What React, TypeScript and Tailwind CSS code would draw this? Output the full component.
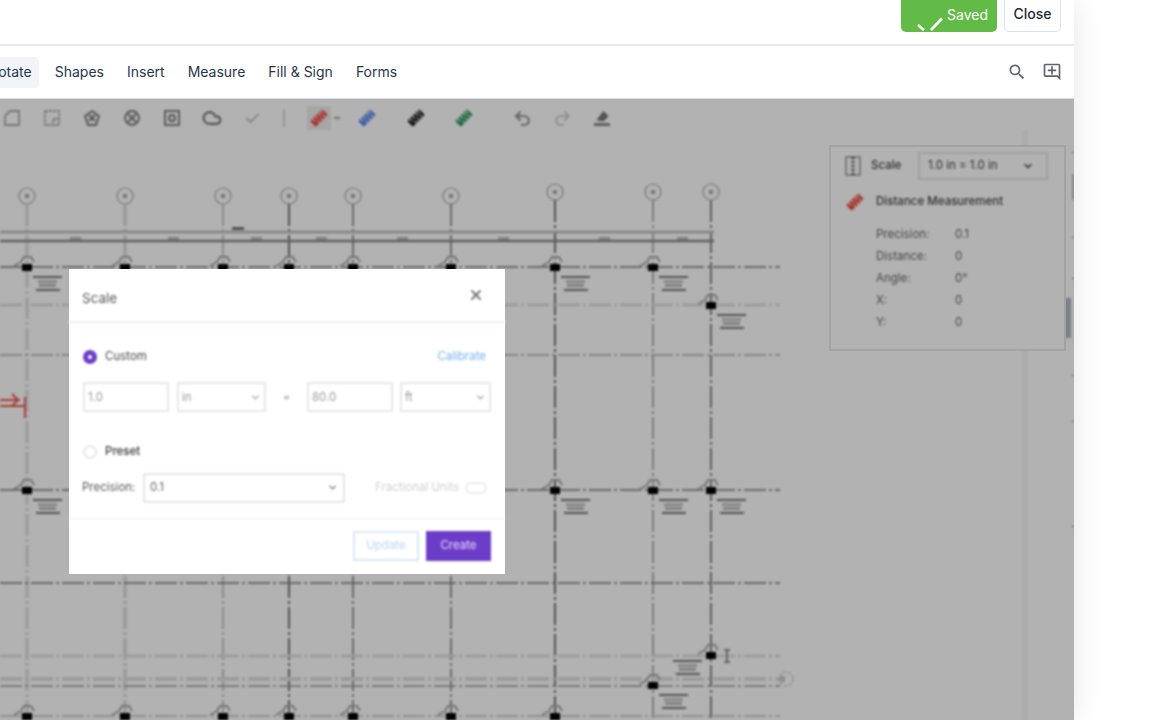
import { Check, ChevronDown, Cloud, Redo2, Undo2, X } from 'lucide-react';
import { MdOutlineAddComment, MdSearch } from 'react-icons/md';

const tabs = ['Shapes', 'Insert', 'Measure', 'Fill & Sign', 'Forms'];

const gridLines = [
    { x: 27, y: 196, stroke: '#e4e4e4', w: 4 },
    { x: 125, y: 196, stroke: '#e0e0e0', w: 4 },
    { x: 223, y: 196, stroke: '#b8b8b8', w: 1.5 },
    { x: 289, y: 196, stroke: '#777', w: 2 },
    { x: 353, y: 196, stroke: '#999', w: 2 },
    { x: 451, y: 196, stroke: '#999', w: 2 },
    { x: 555, y: 192, stroke: '#777', w: 2 },
    { x: 653, y: 192, stroke: '#b4b4b4', w: 2 },
    { x: 711, y: 192, stroke: '#888', w: 2 },
];

const rows = [
    { y: 267, stroke: '#777', w: 1.5 },
    { y: 305, stroke: '#e0e0e0', w: 3 },
    { y: 355, stroke: '#aaa', w: 1.5 },
    { y: 490, stroke: '#777', w: 1.5 },
    { y: 583, stroke: '#777', w: 1.5 },
    { y: 656, stroke: '#e0e0e0', w: 3 },
    { y: 679, stroke: '#e0e0e0', w: 4 },
    { y: 686, stroke: '#999', w: 1.5 },
    { y: 716, stroke: '#d0d0d0', w: 2 },
];

const columns = [
    [27, 267], [125, 267], [223, 267], [289, 267], [353, 267], [451, 267], [555, 267], [653, 267],
    [711, 305], [27, 490], [555, 490], [653, 490], [711, 490], [711, 655], [653, 685],
    [27, 716], [125, 716], [223, 716], [289, 716], [353, 716], [451, 716], [555, 716],
];

const dimLabels = [75, 173, 256, 321, 402, 503, 604, 682];

function Plan() {
    return (
        <svg className="absolute inset-0 blur-[1px]" width="1074" height="621" viewBox="0 99 1074 621">
            <rect x="1022" y="130" width="6" height="590" fill="#f8f8f8" />
            {gridLines.map((l) => (
                <g key={l.x}>
                    <circle cx={l.x} cy={l.y} r="8" fill="none" stroke="#aaa" strokeWidth="1.2" />
                    <rect x={l.x - 2} y={l.y - 2} width="4" height="4" fill="#aaa" />
                    <line x1={l.x} y1={l.y + 8} x2={l.x} y2="720" stroke={l.stroke} strokeWidth={l.w} strokeDasharray="22 3 3 3" />
                </g>
            ))}
            {rows.map((r) => (
                <line key={r.y} x1="0" y1={r.y} x2="780" y2={r.y} stroke={r.stroke} strokeWidth={r.w} strokeDasharray="22 3 3 3" />
            ))}
            <line x1="0" y1="232" x2="714" y2="232" stroke="#bbb" strokeWidth="2.5" />
            <line x1="0" y1="241" x2="714" y2="241" stroke="#888" strokeWidth="2.5" />
            {dimLabels.map((x) => (
                <rect key={x} x={x - 5} y="237" width="11" height="3" fill="#bbb" />
            ))}
            <rect x="232" y="227" width="12" height="3" fill="#777" />
            {columns.map(([x, y]) => (
                <g key={`${x}-${y}`}>
                    <path d={`M${x - 13} ${y - 1} L${x - 6} ${y - 5} L${x - 3} ${y - 10} H${x + 4} L${x + 7} ${y - 5}`} fill="none" stroke="#aaa" strokeWidth="2" />
                    <rect x={x - 5} y={y - 3} width="10" height="7" fill="#000" />
                </g>
            ))}
            {columns.map(([x, y]) => {
                const flip = x === 711 && y === 655;
                const lx = flip ? x - 38 : x + 6;
                const ly = flip ? y + 5 : y + 9;
                return (
                    <g key={`label-${x}-${y}`}>
                        <rect x={lx} y={ly} width="29" height="2" fill="#777" />
                        <rect x={lx + 5} y={ly + 4} width="19" height="3" fill="#c4c4c4" />
                        <rect x={lx + 6} y={ly + 8} width="17" height="3" fill="#bbb" />
                        <rect x={lx + 3} y={ly + 13} width="24" height="2" fill="#777" />
                    </g>
                );
            })}
            <path d="M0 400 H20 M0 406 H25 M18 400 L12 394 M18 400 L12 406 M25 397 V418" fill="none" stroke="#ef5a4e" strokeWidth="2" />
            <path d="M727 650 V662 M724 650 H730 M724 662 H730" stroke="#777" strokeWidth="1.5" fill="none" />
            <circle cx="786" cy="679" r="7" fill="none" stroke="#ccc" strokeWidth="1.5" strokeDasharray="3 2" />
            <rect x="780" y="676" width="5" height="6" fill="#ccc" />
            <g fill="#888">
                <rect x="1072" y="152" width="2" height="1" />
                <rect x="1072" y="174" width="2" height="26" fill="#bbb" />
                <rect x="1072" y="237" width="2" height="1" />
                <rect x="1072" y="278" width="2" height="1" />
                <rect x="1072" y="375" width="2" height="1" />
                <rect x="1072" y="421" width="2" height="1" />
                <rect x="1072" y="526" width="2" height="1" />
            </g>
            <rect x="1064" y="298" width="7" height="40" fill="#aeb9c4" />
        </svg>
    );
}

function RulerIcon({ color, size = 20 }: { color: string; size?: number }) {
    return (
        <svg width={size} height={size} viewBox="0 0 20 20">
            <g transform="rotate(-45 10 10)">
                <rect x="1.5" y="6" width="17" height="8" rx="1.5" fill={color} />
                <path d="M5 6v3.5M9 6v3.5M13 6v3.5M16 6v3.5M7 14v-3M11 14v-3M15 14v-3" stroke="#fff" strokeWidth="1.2" />
            </g>
        </svg>
    );
}

function ShapeIcon({ children }: { children: React.ReactNode }) {
    return (
        <div className="w-10 flex justify-center">
            <svg width="18" height="18" viewBox="0 0 18 18" fill="none" stroke="#777" strokeWidth="1.8">
                {children}
            </svg>
        </div>
    );
}

function Toolbar() {
    return (
        <div className="relative h-[38px] flex items-center -ml-2 blur-[1.1px]">
            <ShapeIcon><path d="M2 16V7l5-5h9v14z" stroke="#aaa" /></ShapeIcon>
            <ShapeIcon><path d="M2 2h14v7M2 2v14h7M10 10h6v6h-6z" stroke="#aaa" strokeDasharray="3 1" /></ShapeIcon>
            <ShapeIcon><path d="M9 2l7 5-3 9H5L2 7zM6 6l6 6M12 6l-6 6" /></ShapeIcon>
            <ShapeIcon><circle cx="9" cy="9" r="7" /><path d="M5 5l8 8M13 5l-8 8" /></ShapeIcon>
            <ShapeIcon><rect x="2" y="2" width="14" height="14" /><circle cx="9" cy="9" r="3" /></ShapeIcon>
            <div className="w-10 flex justify-center"><Cloud size={20} strokeWidth={2.6} className="text-[#777]" /></div>
            <div className="w-10 flex justify-center"><Check size={17} strokeWidth={2.4} className="text-[#bbb]" /></div>
            <div className="ml-[11px] w-0.5 h-[18px] bg-[#d8d8d8]" />
            <div className="ml-[22px] w-6 h-6 bg-[#eee] flex items-center justify-center"><RulerIcon color="#ee4a3f" /></div>
            <div className="ml-[3px] w-1.5 h-0.5 bg-[#aaa]" />
            <div className="ml-[17px]"><RulerIcon color="#5a86ee" /></div>
            <div className="ml-[29px]"><RulerIcon color="#222" /></div>
            <div className="ml-[28px]"><RulerIcon color="#2f9a5c" /></div>
            <div className="ml-[39px]"><Undo2 size={19} strokeWidth={2.4} className="text-[#888]" /></div>
            <div className="ml-[21px]"><Redo2 size={19} strokeWidth={2.4} className="text-[#ccc]" /></div>
            <div className="ml-[21px]">
                <svg width="19" height="19" viewBox="0 0 19 19">
                    <path d="M10.5 2l5 5-4.5 5H5.5L4 10.5z" fill="#777" />
                    <path d="M1 15.5h16" stroke="#777" strokeWidth="2.6" />
                </svg>
            </div>
        </div>
    );
}

function MeasurePanel() {
    const rowsData = [
        ['Precision:', '0.1'],
        ['Distance:', '0'],
        ['Angle:', '0°'],
        ['X:', '0'],
        ['Y:', '0'],
    ];
    return (
        <div className="absolute left-[829px] top-[46px] w-[237px] h-[206px] bg-white border-2 border-[#e8e8e8]">
            <div className="blur-[1.1px] text-[#444] text-[11.5px]">
                <div className="flex items-center pl-[14px] pt-[5px]">
                    <svg width="16" height="20" viewBox="0 0 16 20" fill="none">
                        <rect x="1" y="1" width="14" height="18" stroke="#999" strokeWidth="1.5" />
                        <path d="M8 1v18" stroke="#555" strokeWidth="3" strokeDasharray="2 2" />
                    </svg>
                    <span className="ml-[10px] w-[47px] font-medium">Scale</span>
                    <div className="w-[130px] h-[28px] border-2 border-[#e4e4e4] flex items-center justify-between pl-2 pr-3">
                        <span>1.0 in = 1.0 in</span>
                        <ChevronDown size={12} strokeWidth={3} className="text-[#444]" />
                    </div>
                </div>
                <div className="flex items-center pl-[14px] mt-[12px]">
                    <RulerIcon color="#ee4a3f" />
                    <span className="ml-[11px] font-medium text-[#444]">Distance Measurement</span>
                </div>
                <div className="pl-[45px] mt-[12px] flex flex-col">
                    {rowsData.map(([label, value]) => (
                        <div key={label} className="flex h-[22px] items-center text-[#666]">
                            <span className="w-[79px]">{label}</span>
                            <span>{value}</span>
                        </div>
                    ))}
                </div>
            </div>
        </div>
    );
}

function Field({ value, width, select }: { value: string; width: string; select?: boolean }) {
    return (
        <div className={`${width} h-[30px] border-2 border-[#e8e8e8] flex items-center justify-between pl-[3px] pr-[3px] text-[#999]`}>
            <span>{value}</span>
            {select && <ChevronDown size={11} strokeWidth={2.5} className="text-[#999]" />}
        </div>
    );
}

function ScaleDialog() {
    return (
        <div className="absolute left-[69px] top-[170px] w-[436px] h-[305px] bg-white">
            <div className="blur-[1.1px] text-[11.5px]">
                <div className="h-[54px] flex items-center justify-between pl-[13px] pr-[21px] border-b-2 border-[#eef1f2]">
                    <span className="text-[13.5px] text-[#555] pt-[6px]">Scale</span>
                    <X size={16} strokeWidth={2.8} className="text-[#777]" />
                </div>
                <div className="px-[14px]">
                    <div className="flex items-center justify-between pt-[25px] pr-[5px]">
                        <div className="flex items-center gap-[8px]">
                            <div className="w-3.5 h-3.5 rounded-full bg-[#6b3dc9] flex items-center justify-center">
                                <div className="w-1 h-1 rounded-full bg-white" />
                            </div>
                            <span className="text-[#444]">Custom</span>
                        </div>
                        <span className="text-[#79b0ea]">Calibrate</span>
                    </div>
                    <div className="flex items-center mt-[17px]">
                        <Field value="1.0" width="w-[86px]" />
                        <div className="w-2" />
                        <Field value="in" width="w-[89px]" select />
                        <span className="w-[41px] text-center text-[#999]">=</span>
                        <Field value="80.0" width="w-[86px]" />
                        <div className="w-[7px]" />
                        <Field value="ft" width="w-[91px]" select />
                    </div>
                    <div className="flex items-center gap-[8px] mt-[31px]">
                        <div className="w-3.5 h-3.5 rounded-full border-2 border-[#e6e6e6]" />
                        <span className="text-[#333] font-medium">Preset</span>
                    </div>
                    <div className="flex items-center mt-[12px] -ml-[1px]">
                        <span className="w-[61px] text-[#555]">Precision:</span>
                        <div className="w-[202px] h-[30px] border-2 border-[#e6e6e6] flex items-center justify-between px-[5px] text-[#666]">
                            <span>0.1</span>
                            <ChevronDown size={11} strokeWidth={3} className="text-[#777]" />
                        </div>
                        <span className="ml-[30px] text-[#d0d0d0]">Fractional Units</span>
                        <div className="ml-[6px] w-[22px] h-3 rounded-full border-2 border-[#ececec]" />
                    </div>
                </div>
                <div className="mt-[15px] border-t border-[#f6f6f6] pt-[12px] pr-[14px] flex justify-end gap-[7px]">
                    <div className="w-[66px] h-[30px] border-2 border-[#d9e8f7] flex items-center justify-center text-[#b9d6f2]">Update</div>
                    <div className="w-[65px] h-[30px] bg-[#6b3dc9] flex items-center justify-center text-[#e6dcf7]">Create</div>
                </div>
            </div>
        </div>
    );
}

export default function App() {
    return (
        <div className="h-screen w-full overflow-hidden bg-white font-[Inter,sans-serif]">
            <div className="w-[1074px] h-full flex flex-col shadow-[0_0_28px_rgba(0,0,0,0.1)]">
                <header className="h-[46px] flex-none flex justify-end items-start gap-[7px] pr-[13px] border-b-2 border-[#e6e9f0] bg-white">
                    <button className="relative w-[96px] h-[32px] bg-[#62bb46] rounded-b-[5px] overflow-hidden text-sm text-white text-right pr-[9px] pb-[3px]">
                        <svg className="absolute left-[15px] top-[16px]" width="30" height="16" viewBox="0 0 30 16" fill="none">
                            <path d="M2 9l6 5M15 14L26 2.5" stroke="#fff" strokeWidth="2.6" />
                        </svg>
                        Saved
                    </button>
                    <button className="w-[57px] h-[32px] bg-white border border-t-0 border-[#dbe1ec] rounded-b-[5px] text-sm font-medium text-[#1e293b] pb-[3px]">
                        Close
                    </button>
                </header>
                <nav className="h-[53px] flex-none flex items-center justify-between border-b border-[#dadde3] bg-white pr-[12px]">
                    <div className="flex items-center gap-[9px] -ml-[35px] text-sm text-[#27364f]">
                        <span className="h-[31px] px-[7px] flex items-center bg-[#f1f5f9] rounded">Annotate</span>
                        {tabs.map((t) => (
                            <span key={t} className="h-[31px] px-[7px] flex items-center">{t}</span>
                        ))}
                    </div>
                    <div className="flex items-center gap-[15px] text-[#5b6470]">
                        <MdSearch size={20} />
                        <MdOutlineAddComment size={20} />
                    </div>
                </nav>
                <main className="relative flex-1 overflow-hidden bg-white">
                    <Plan />
                    <Toolbar />
                    <MeasurePanel />
                    <div className="absolute inset-0 bg-black/30" />
                    <ScaleDialog />
                </main>
            </div>
        </div>
    );
}
